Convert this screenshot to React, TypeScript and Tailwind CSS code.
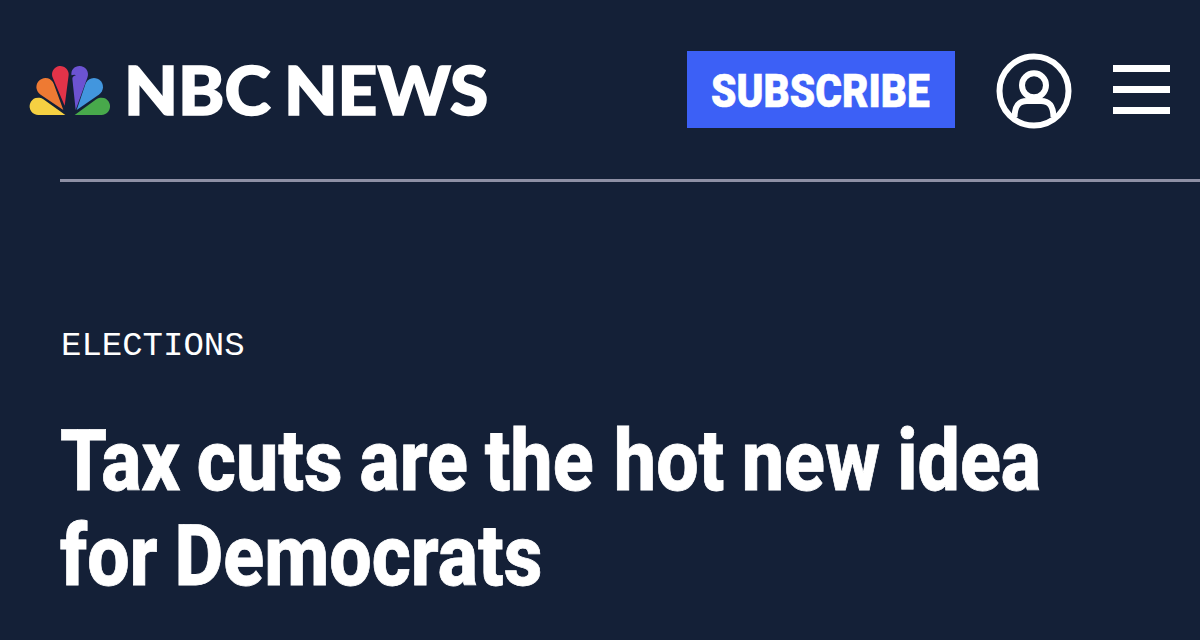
import React from 'react';

const Peacock: React.FC = () => (
  <svg viewBox="27 45 246 153" className="w-[82px] h-[51px]" aria-hidden="true">
    <path fill="#f5d042" d="M136 195H55A26 26 0 1 1 70.1 147.9Z" />
    <path fill="#ee7a33" d="M130 180L60.9 133.4A27 27 0 1 1 101.4 101.7Z" />
    <path fill="#e23349" d="M134 167L98 82.8A25 25 0 1 1 145.8 76.2Z" />
    <path fill="#6c53d2" d="M167 180L157 86C157 81 161 78 168 76C165 73 160 74 154.5 76C152 60 163 48 179 48A25 25 0 0 1 202.5 81.5Z" />
    <path fill="#4296de" d="M170 180L196.4 102.3A27 27 0 1 1 237.4 133.2Z" />
    <path fill="#48a94b" d="M164 195L228.9 147.9A26 26 0 1 1 244 195Z" />
  </svg>
);

const Logo: React.FC = () => (
  <a href="#" aria-label="NBC News" className="flex items-start">
    <div className="mt-[65px]">
      <Peacock />
    </div>
    <div className="ml-[13px] mt-[56px] flex font-[Lato,sans-serif] text-[66px] leading-[68px] font-black [-webkit-text-stroke:1.6px_white]">
      <span className="w-[160px] origin-left scale-x-[1.06]">NBC</span>
      <span className="origin-left scale-x-[1.05]">NEWS</span>
    </div>
  </a>
);

const AccountIcon: React.FC = () => (
  <svg viewBox="0 0 76 76" className="w-[76px] h-[76px]" fill="none" stroke="#fff" strokeWidth="6">
    <circle cx="38" cy="38" r="34.5" />
    <circle cx="38" cy="32.3" r="12" />
    <path d="M18.5 64C18.8 53 22.5 48 31 48H45C53.5 48 57.2 53 57.5 64" />
  </svg>
);

const MenuIcon: React.FC = () => (
  <div className="flex w-[57px] flex-col gap-[14px]">
    <span className="h-[7px] bg-white" />
    <span className="h-[7px] bg-white" />
    <span className="h-[7px] bg-white" />
  </div>
);

const App: React.FC = () => {
  return (
    <div className="h-[640px] w-[1200px] overflow-hidden bg-[#142037] text-white">
      <header className="flex h-[179px] items-start pl-[29px] pr-[30px]">
        <Logo />
        <button className="ml-auto mt-[51px] flex h-[77px] w-[268px] items-center justify-center bg-[#3c60f6] pt-[3px] pr-[2px] font-[Roboto,sans-serif] text-[47px] font-black [-webkit-text-stroke:0.6px_white]">
          <span className="scale-x-[0.865]">SUBSCRIBE</span>
        </button>
        <button className="ml-[41px] mt-[53px]" aria-label="Account">
          <AccountIcon />
        </button>
        <button className="ml-[41px] mt-[65px]" aria-label="Menu">
          <MenuIcon />
        </button>
      </header>

      <main className="ml-[60px]">
        <div className="h-[3px] bg-[#8e90a5]" />
        <p className="mt-[144px] pl-px font-['Liberation_Mono',monospace] text-[34px] leading-[40px]">ELECTIONS</p>
        <h1 className="mt-[47px] origin-left scale-x-[0.876] whitespace-nowrap font-[Roboto,sans-serif] text-[86px] leading-[95px] font-extrabold [word-spacing:-2.3px] [-webkit-text-stroke:0.8px_white]">
          Tax cuts are the <span className="ml-[4px] [word-spacing:-1.6px]">hot new idea</span>
          <br />
          for Democrats
        </h1>
      </main>
    </div>
  );
};

export default App;
